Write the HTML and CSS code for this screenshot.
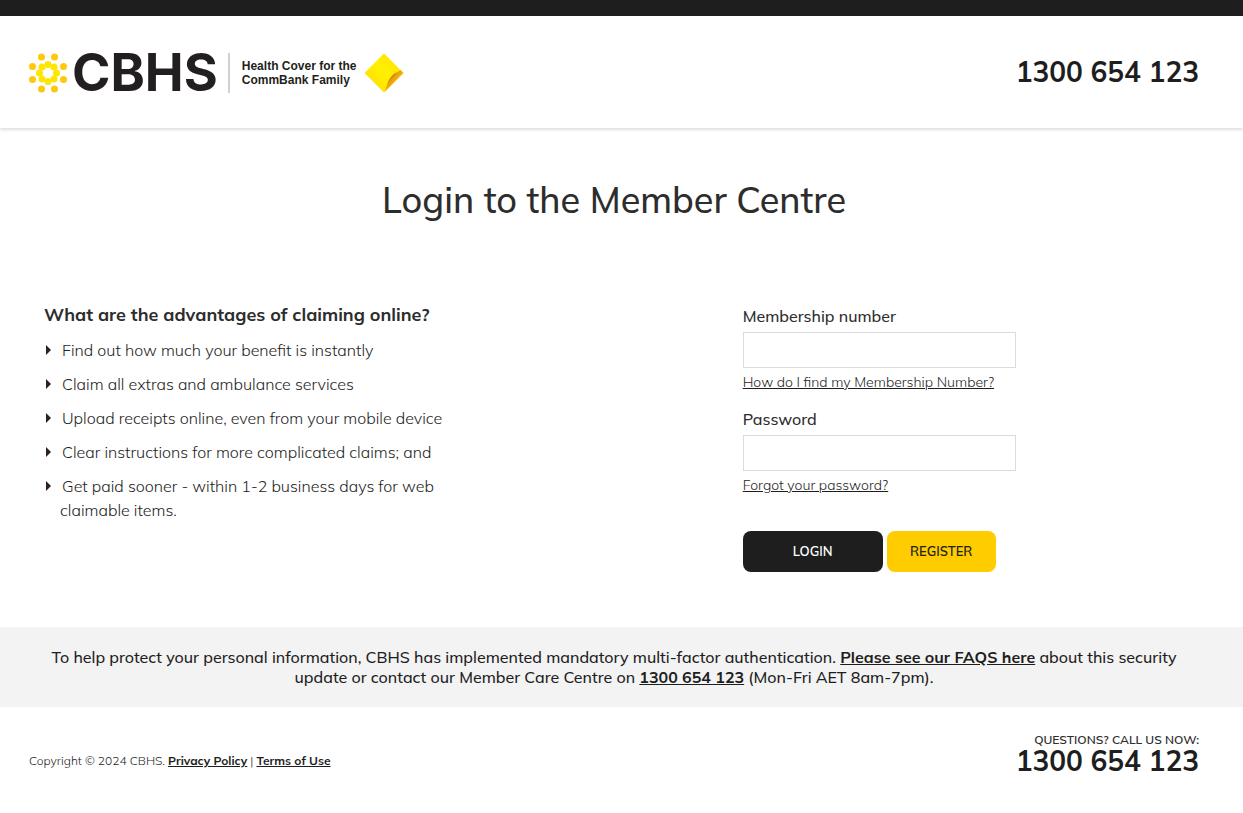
FILE: index.html
```html
<!DOCTYPE html>
<html lang="en">
<head>
<meta charset="utf-8">
<meta name="viewport" content="width=device-width, initial-scale=1">
<title>CBHS Member Centre</title>
<link rel="stylesheet" href="styles.css">
</head>
<body>
<header class="header">
  <div class="brand">
    <svg class="brand-sun" viewBox="0 0 40 40" aria-hidden="true">
      <g fill="#ffc80a">
        <circle cx="13.5" cy="4" r="3.5"/><circle cx="26.5" cy="4" r="3.5"/>
        <circle cx="4.500" cy="13.500" r="3.500"/><circle cx="35.500" cy="13.500" r="3.500"/>
        <circle cx="4.500" cy="26.500" r="3.500"/><circle cx="35.500" cy="26.500" r="3.500"/>
        <circle cx="13.500" cy="36" r="3.500"/><circle cx="26.500" cy="36" r="3.500"/>
      </g>
      <g fill="#ffe600">
        <circle cx="20" cy="11.500" r="3.500"/><circle cx="26" cy="14" r="3.500"/>
        <circle cx="28.500" cy="20" r="3.500"/><circle cx="26" cy="26" r="3.500"/>
        <circle cx="20" cy="28.500" r="3.500"/><circle cx="14" cy="26" r="3.500"/>
        <circle cx="11.500" cy="20" r="3.500"/><circle cx="14" cy="14" r="3.500"/>
      </g>
    </svg>
    <span class="brand-name">CBHS</span>
    <span class="brand-tagline">Health Cover for the<br>CommBank Family</span>
    <svg class="brand-diamond" viewBox="0 0 40 40" aria-hidden="true">
      <defs>
        <linearGradient id="face" x1="0" y1="1" x2="1" y2="0">
          <stop offset="0" stop-color="#ffd900"/><stop offset=".5" stop-color="#fff000"/><stop offset="1" stop-color="#ffe000"/>
        </linearGradient>
        <linearGradient id="fold" gradientUnits="userSpaceOnUse" x1="25" y1="23" x2="33" y2="30">
          <stop offset="0" stop-color="#a85a18"/><stop offset=".4" stop-color="#e89a10"/><stop offset="1" stop-color="#ffc400"/>
        </linearGradient>
      </defs>
      <path d="M20 0.500 39.500 20 20 39.500 0.500 20Z" fill="url(#face)"/>
      <path d="M20 39.500C23 36 22 30 27 24C31 19 35 19 36.500 17L39.500 20Z" fill="url(#fold)"/>
    </svg>
  </div>
  <a class="phone" href="tel:1300654123">1300 654 123</a>
</header>
<main>
  <h1 class="title">Login to the Member Centre</h1>
  <div class="columns">
    <section class="advantages">
      <h2 class="subtitle">What are the advantages of claiming online?</h2>
      <ul class="list">
        <li>Find out how much your benefit is instantly</li>
        <li>Claim all extras and ambulance services</li>
        <li>Upload receipts online, even from your mobile device</li>
        <li>Clear instructions for more complicated claims; and</li>
        <li>Get paid sooner - within 1-2 business days for web claimable items.</li>
      </ul>
    </section>
    <form class="login">
      <div class="field">
        <label for="member">Membership number</label>
        <input id="member" type="text">
        <a href="#">How do I find my Membership Number?</a>
      </div>
      <div class="field">
        <label for="password">Password</label>
        <input id="password" type="password">
        <a href="#">Forgot your password?</a>
      </div>
      <div class="actions">
        <button class="button button-dark" type="submit">LOGIN</button>
        <button class="button button-gold" type="button">REGISTER</button>
      </div>
    </form>
  </div>
  <p class="notice">To help protect your personal information, CBHS has implemented mandatory multi-factor authentication. <a href="#">Please see our FAQS here</a> about this security update or contact our Member Care Centre on <a href="tel:1300654123">1300 654 123</a> (Mon-Fri AET 8am-7pm).</p>
</main>
<footer class="footer">
  <p class="legal">Copyright © 2024 CBHS. <a href="#">Privacy Policy</a> | <a href="#">Terms of Use</a></p>
  <div class="contact">
    <span class="contact-label">QUESTIONS? CALL US NOW:</span>
    <a class="phone" href="tel:1300654123">1300 654 123</a>
  </div>
</footer>
</body>
</html>
```
FILE: styles.css
```css
* { box-sizing: border-box; }
body {
  margin: 0;
  background: #fff;
  color: #2d2d2d;
  font: 400 16px/24px Muli, Mulish, Lato, sans-serif;
}
h1, h2, p, ul { margin: 0; padding: 0; }
a { color: #1e1e1e; }

.header {
  display: flex;
  align-items: center;
  justify-content: space-between;
  height: 128px;
  padding: 2px 44px 0 28px;
  border-top: 16px solid #1e1e1e;
  box-shadow: 0 2px 3px rgba(0, 0, 0, .13);
}
.brand { display: flex; align-items: center; }
.brand-sun { width: 40px; height: 40px; }
.brand-name {
  margin-left: 4px;
  color: #231f20;
  font: 700 52px/40px Inter, "Liberation Sans", sans-serif;
}
.brand-tagline {
  margin-left: 10px;
  padding: 6px 0;
  padding-left: 12px;
  border-left: 2px solid #d0d0d0;
  color: #231f20;
  font: 700 12px/14px "Liberation Sans", Arial, sans-serif;
}
.brand-diamond { width: 40px; height: 40px; margin-left: 8px; }
.phone {
  padding-bottom: 2px;
  color: #1e1e1e;
  font-size: 28px;
  line-height: 24px;
  font-weight: 700;
  text-decoration: none;
}

.title {
  padding: 48px 44px 0 29px;
  font-size: 36px;
  line-height: 48px;
  font-weight: 500;
  text-align: center;
}
.columns {
  display: grid;
  grid-template-columns: 61fr 39fr;
  padding: 79px 44px 55px 29px;
}
.advantages { max-width: 430px; padding-left: 15px; }
.subtitle { font-size: 18px; line-height: 24px; font-weight: 700; }
.list {
  display: grid;
  gap: 10px;
  padding-top: 11px;
  list-style: none;
  color: #1e1e1e;
  font-weight: 300;
}
.list li { padding-left: 16px; }
.list li::before {
  content: "";
  display: inline-block;
  margin: 0 11px 1px -14px;
  border: 5px solid transparent;
  border-left-color: #2d1f24;
  border-right-width: 0;
}

.login { padding-top: 1px; }
.field {
  display: flex;
  flex-direction: column;
  align-items: flex-start;
  margin-bottom: 13px;
}
.field label { font-weight: 500; }
.field input {
  width: 273px;
  max-width: 100%;
  height: 36px;
  margin: 4px 0 2px;
  padding: 0 10px;
  border: 1px solid #dadbdf;
  background: #fff;
  font: inherit;
}
.field a { font-size: 14px; font-weight: 300; }
.actions { display: flex; gap: 4px; padding-top: 21px; }
.button {
  height: 41px;
  padding-bottom: 2px;
  border: 0;
  border-radius: 8px;
  font: 600 13px/20px Muli, Mulish, Lato, sans-serif;
}
.button-dark { width: 140px; background: #1e1e1e; color: #fff; }
.button-gold { width: 109px; background: #fc0; color: #1e1e1e; }

.notice {
  padding: 20px 44px 20px 29px;
  background: #f3f3f3;
  color: #1e1e1e;
  font-weight: 500;
  line-height: 20px;
  text-align: center;
}
.notice a { font-weight: 700; }

.footer {
  display: flex;
  justify-content: space-between;
  align-items: flex-end;
  padding: 24px 44px 40px 29px;
}
.legal {
  padding-bottom: 2px;
  color: #1e1e1e;
  font-size: 12px;
  line-height: 24px;
  font-weight: 300;
}
.legal a { font-weight: 700; }
.contact { display: flex; flex-direction: column; align-items: flex-end; }
.contact-label { font-size: 12px; line-height: 18px; font-weight: 600; }
```
